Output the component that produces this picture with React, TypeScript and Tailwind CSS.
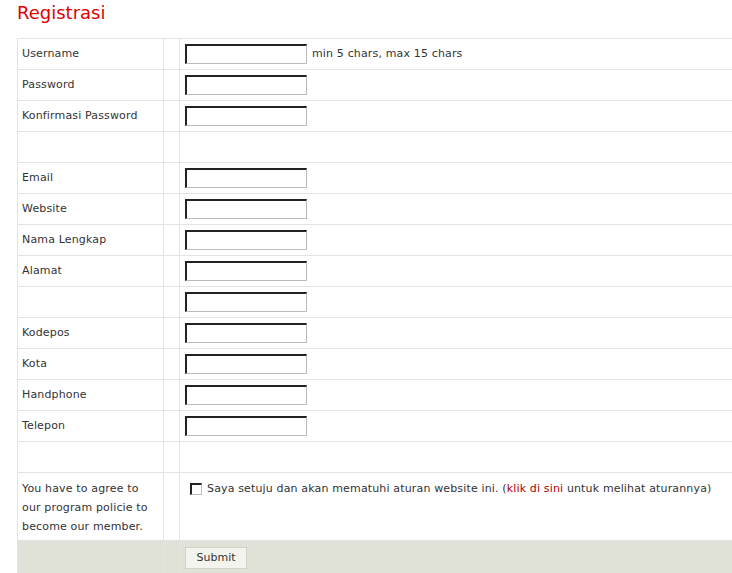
const rows: { label: string; input: boolean; hint?: string }[] = [
  { label: 'Username', input: true, hint: 'min 5 chars, max 15 chars' },
  { label: 'Password', input: true },
  { label: 'Konfirmasi Password', input: true },
  { label: '', input: false },
  { label: 'Email', input: true },
  { label: 'Website', input: true },
  { label: 'Nama Lengkap', input: true },
  { label: 'Alamat', input: true },
  { label: '', input: true },
  { label: 'Kodepos', input: true },
  { label: 'Kota', input: true },
  { label: 'Handphone', input: true },
  { label: 'Telepon', input: true },
  { label: '', input: false },
];

function TextBox() {
  return (
    <input
      type="text"
      className="block w-[122px] h-[20px] bg-white border border-t-[#222] border-l-[#222] border-r-[#bbb] border-b-[#bbb] border-t-2 border-l-2 outline-none"
    />
  );
}

export default function App() {
  return (
    <div className="w-[732px] h-[573px] overflow-hidden bg-white text-[#333] font-['DejaVu_Sans',sans-serif] text-[11px] tracking-[0.15px]">
      <h1 className="pl-[17px] pt-[1px] h-[38px] text-[18px] leading-[24px] tracking-normal text-[#e00000]">Registrasi</h1>
      <table className="ml-[17px] w-[720px] border-collapse">
        <tbody>
          {rows.map((row, i) => (
            <tr key={i} className="h-[31px]">
              <td className="w-[146px] border border-[#e3e3e3] pl-[4px] pt-[1px] align-middle">{row.label}</td>
              <td className="w-[16px] border border-[#e3e3e3]" />
              <td className="border border-[#e3e3e3] border-r-0 pl-[5px] align-middle">
                {row.input && (
                  <div className="flex items-center gap-[5px]">
                    <TextBox />
                    {row.hint && <span className="pt-[1px]">{row.hint}</span>}
                  </div>
                )}
              </td>
            </tr>
          ))}
          <tr className="h-[68px]">
            <td className="border border-[#e3e3e3] pl-[4px] pt-[6px] align-top leading-[19px]">
              You have to agree to
              <br />
              our program policie to
              <br />
              become our member.
            </td>
            <td className="border border-[#e3e3e3]" />
            <td className="border border-[#e3e3e3] border-r-0 pl-[10px] pt-[8px] align-top">
              <label className="flex items-center gap-[5px]">
                <span className="block w-[12px] h-[12px] bg-white border border-t-[#222] border-l-[#222] border-r-[#bbb] border-b-[#bbb] border-t-2 border-l-2" />
                <span>
                  Saya setuju dan akan mematuhi aturan website ini. (
                  <span className="text-[#b00000]">klik di sini</span> untuk melihat aturannya)
                </span>
              </label>
            </td>
          </tr>
          <tr className="h-[34px] bg-[#e0e2d7]">
            <td className="border border-[#e3e3e3] border-b-0" />
            <td className="border border-[#e3e3e3] border-b-0" />
            <td className="border border-[#e3e3e3] border-r-0 border-b-0 pl-[5px] align-top pt-[6px]">
              <button className="w-[62px] h-[22px] bg-[#f4f4ef] border border-[#d3d3cb] text-[#333] text-[11px] tracking-normal">
                Submit
              </button>
            </td>
          </tr>
        </tbody>
      </table>
    </div>
  );
}
